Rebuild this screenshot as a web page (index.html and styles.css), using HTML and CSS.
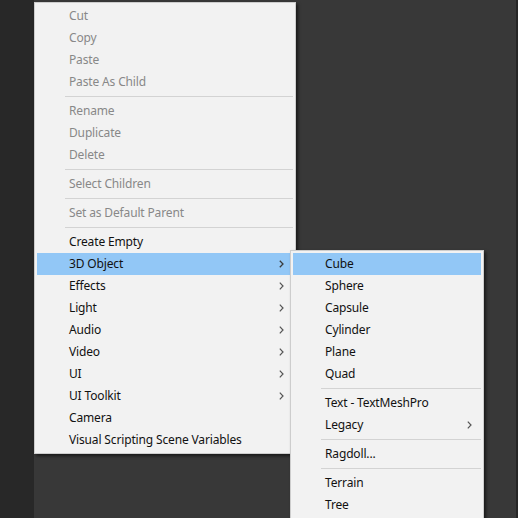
FILE: index.html
```html
<!DOCTYPE html>
<html>
<head>
<meta charset="utf-8">
<link rel="stylesheet" href="styles.css">
</head>
<body>
<div class="desk">
  <div class="strip-left"></div>
  <div class="scene"></div>
  <div class="strip-right"></div>
</div>

<div class="menu main-menu">
  <div class="item disabled">Cut</div>
  <div class="item disabled">Copy</div>
  <div class="item disabled">Paste</div>
  <div class="item disabled">Paste As Child</div>
  <div class="sep"></div>
  <div class="item disabled">Rename</div>
  <div class="item disabled">Duplicate</div>
  <div class="item disabled">Delete</div>
  <div class="sep"></div>
  <div class="item disabled">Select Children</div>
  <div class="sep"></div>
  <div class="item disabled">Set as Default Parent</div>
  <div class="sep"></div>
  <div class="item">Create Empty</div>
  <div class="item active sub">3D Object<svg class="arrow" width="5" height="8" viewBox="0 0 5 8"><path d="M0.8 0.7 L4 4 L0.8 7.3" fill="none" stroke="#3a3a3a" stroke-width="1.3"/></svg></div>
  <div class="item sub">Effects<svg class="arrow" width="5" height="8" viewBox="0 0 5 8"><path d="M0.8 0.7 L4 4 L0.8 7.3" fill="none" stroke="#555" stroke-width="1.2"/></svg></div>
  <div class="item sub">Light<svg class="arrow" width="5" height="8" viewBox="0 0 5 8"><path d="M0.8 0.7 L4 4 L0.8 7.3" fill="none" stroke="#555" stroke-width="1.2"/></svg></div>
  <div class="item sub">Audio<svg class="arrow" width="5" height="8" viewBox="0 0 5 8"><path d="M0.8 0.7 L4 4 L0.8 7.3" fill="none" stroke="#555" stroke-width="1.2"/></svg></div>
  <div class="item sub">Video<svg class="arrow" width="5" height="8" viewBox="0 0 5 8"><path d="M0.8 0.7 L4 4 L0.8 7.3" fill="none" stroke="#555" stroke-width="1.2"/></svg></div>
  <div class="item sub">UI<svg class="arrow" width="5" height="8" viewBox="0 0 5 8"><path d="M0.8 0.7 L4 4 L0.8 7.3" fill="none" stroke="#555" stroke-width="1.2"/></svg></div>
  <div class="item sub">UI Toolkit<svg class="arrow" width="5" height="8" viewBox="0 0 5 8"><path d="M0.8 0.7 L4 4 L0.8 7.3" fill="none" stroke="#555" stroke-width="1.2"/></svg></div>
  <div class="item">Camera</div>
  <div class="item">Visual Scripting Scene Variables</div>
</div>

<div class="menu sub-menu">
  <div class="item active">Cube</div>
  <div class="item">Sphere</div>
  <div class="item">Capsule</div>
  <div class="item">Cylinder</div>
  <div class="item">Plane</div>
  <div class="item">Quad</div>
  <div class="sep"></div>
  <div class="item">Text - TextMeshPro</div>
  <div class="item sub">Legacy<svg class="arrow" width="5" height="8" viewBox="0 0 5 8"><path d="M0.8 0.7 L4 4 L0.8 7.3" fill="none" stroke="#555" stroke-width="1.2"/></svg></div>
  <div class="sep"></div>
  <div class="item">Ragdoll...</div>
  <div class="sep"></div>
  <div class="item">Terrain</div>
  <div class="item">Tree</div>
</div>
</body>
</html>
```

FILE: styles.css
```css
html, body {
  margin: 0;
  padding: 0;
  width: 518px;
  height: 518px;
  overflow: hidden;
  background: #383838;
  font-family: "Noto Sans", "Noto Sans CJK KR", sans-serif;
  font-size: 12px;
  letter-spacing: -0.15px;
}

.desk {
  display: flex;
  width: 518px;
  height: 518px;
}

.strip-left {
  width: 34px;
  background: #282828;
}

.scene {
  flex: 1;
  background: #383838;
}

.strip-right {
  width: 2px;
  background: #262626;
}

.menu {
  position: absolute;
  box-sizing: border-box;
  background: #f2f2f2;
  border: 1px solid #cdcdcd;
  box-shadow: 2px 2px 3px rgba(0, 0, 0, 0.55);
}

.main-menu {
  left: 34px;
  top: 2px;
  width: 262px;
  padding: 2px 2px 2px 2px;
}

.sub-menu {
  left: 290px;
  top: 250px;
  width: 194px;
  padding: 2px 2px 6px 2px;
}

.item {
  height: 22px;
  line-height: 22px;
  padding-left: 32px;
  padding-right: 9px;
  color: #111;
  white-space: nowrap;
  display: flex;
  align-items: center;
}

.item.disabled {
  color: #888;
}

.item.active {
  background: #92c7f6;
}

.item.sub {
  justify-content: space-between;
}

.arrow {
  display: block;
}

.sep {
  height: 7px;
  display: flex;
  align-items: center;
  padding-left: 28px;
}

.sep::before {
  content: "";
  display: block;
  flex: 1;
  height: 1px;
  background: #d3d3d3;
}
```
